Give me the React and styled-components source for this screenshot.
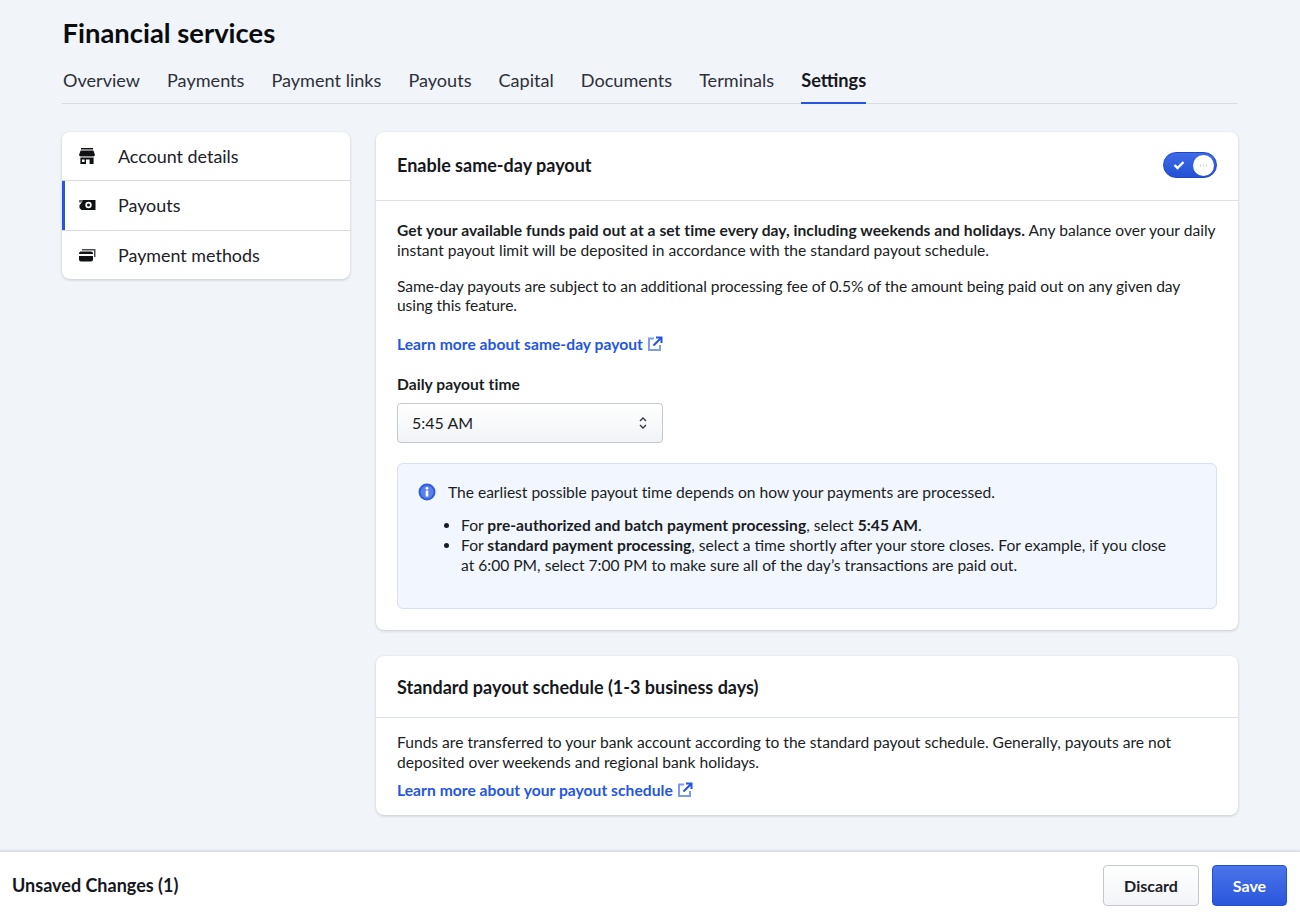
import styled, { createGlobalStyle } from "styled-components";

const GlobalStyle = createGlobalStyle`
  html, body {
    margin: 0;
    padding: 0;
    background: #f1f4f8;
  }
  body {
    font-family: Lato, "Liberation Sans", sans-serif;
    color: #16181d;
  }
  * {
    box-sizing: border-box;
  }
  b {
    letter-spacing: 0.05px;
  }
`;

const Page = styled.div`
  width: 1300px;
  height: 916px;
  overflow: hidden;
  display: flex;
  flex-direction: column;
`;

const Content = styled.main`
  flex: 1;
  padding: 0 62px;
`;

const Title = styled.h1`
  margin: 0;
  padding: 16px 0 0;
  margin-left: 0.5px;
  font-size: 27.4px;
  line-height: 34px;
  font-weight: 700;
  color: #0b0c0f;
`;

const Tabs = styled.nav`
  display: flex;
  gap: 27px;
  margin-top: 14px;
  padding-left: 1px;
  height: 40px;
  border-bottom: 1px solid #d8dbe2;
`;

const Tab = styled.a`
  font-size: ${(p) => (p.$active ? "18.2px" : "18.1px")};
  line-height: 24px;
  padding-top: 4px;
  height: 40px;
  color: ${(p) => (p.$active ? "#16181d" : "#2c3038")};
  font-weight: ${(p) => (p.$active ? 700 : 400)};
  border-bottom: ${(p) => (p.$active ? "2px solid #2456e0" : "none")};
`;

const Columns = styled.div`
  display: grid;
  grid-template-columns: 288px 862px;
  gap: 26px;
  margin-top: 28px;
  align-items: start;
`;

const SideNav = styled.div`
  background: #fff;
  border-radius: 8px;
  box-shadow: 0 1px 3px rgba(30, 40, 60, 0.2);
  overflow: hidden;
`;

const SideItem = styled.div`
  display: flex;
  align-items: center;
  height: ${(p) => p.$height};
  padding: 0 0 ${(p) => p.$lift || "0"} 16px;
  gap: 22px;
  font-size: 17.9px;
  color: #1d2026;
  border-top: ${(p) => (p.$first ? "none" : "1px solid #d8dbe2")};
  box-shadow: ${(p) => (p.$active ? "inset 3px 0 0 #2456e0" : "none")};
`;

const SideIcon = styled.svg`
  width: 18px;
  height: 18px;
  flex: none;
`;

const Stack = styled.div`
  display: flex;
  flex-direction: column;
  gap: 26px;
`;

const Card = styled.section`
  background: #fff;
  border-radius: 8px;
  box-shadow: 0 1px 3px rgba(30, 40, 60, 0.2);
`;

const CardHeader = styled.header`
  display: flex;
  align-items: center;
  justify-content: space-between;
  height: ${(p) => p.$height || "69px"};
  padding: 0 21px ${(p) => p.$lift || "0"};
  border-bottom: 1px solid #dcdfe5;
  font-size: 18px;
  font-weight: 700;
  color: #16181d;
`;

const CardBody = styled.div`
  padding: ${(p) => p.$padding || "20px 21px 21px"};
  font-size: 15.6px;
  line-height: 20px;
  color: #1a1d23;
`;

const Paragraph = styled.p`
  margin: 0 0 ${(p) => p.$gap || "16.4px"};
  line-height: 19.6px;
  letter-spacing: ${(p) => (p.$tight ? "-0.08px" : "normal")};
`;

const Learn = styled.a`
  display: inline-flex;
  align-items: center;
  gap: 4px;
  color: #2456e0;
  font-weight: 700;
  letter-spacing: 0.05px;
  line-height: 20px;
`;

const FieldLabel = styled.div`
  margin-top: 20px;
  font-weight: 700;
  letter-spacing: 0.05px;
  line-height: 20px;
`;

const Select = styled.div`
  display: flex;
  align-items: center;
  justify-content: space-between;
  width: 266px;
  height: 40px;
  margin-top: 9px;
  padding: 0 14px 1px;
  border: 1px solid #c3c7cf;
  border-radius: 4px;
  background: linear-gradient(#ffffff, #f1f3f6);
  font-size: 16px;
`;

const InfoBox = styled.div`
  margin-top: 20px;
  height: 146px;
  padding: 18px 20px;
  background: #f2f6ff;
  border: 1px solid #d5e0f7;
  border-radius: 6px;
`;

const InfoLine = styled.div`
  display: flex;
  align-items: center;
  gap: 12px;
  letter-spacing: -0.02px;
`;

const BulletList = styled.ul`
  margin: 13px 0 0;
  padding: 0 28px 0 43px;
  list-style: disc;
  li {
    line-height: 20px;
  }
`;

const Toggle = styled.div`
  display: flex;
  align-items: center;
  justify-content: space-between;
  width: 54px;
  height: 26px;
  padding: 0 2px 0 9px;
  border-radius: 13px;
  background: linear-gradient(#3f6be6, #2350d6);
  border: 1px solid #2148c4;
`;

const Knob = styled.span`
  display: flex;
  align-items: center;
  justify-content: center;
  width: 21px;
  height: 21px;
  border-radius: 50%;
  background: #fff;
`;

const Footer = styled.footer`
  display: flex;
  align-items: center;
  justify-content: space-between;
  height: 65px;
  padding: 2px 13px 0 12px;
  background: #fff;
  border-top: 1px solid #dcdfe4;
  box-shadow: 0 -1px 2px rgba(30, 40, 60, 0.1);
`;

const FooterLabel = styled.span`
  font-size: 18px;
  font-weight: 700;
  color: #16181d;
`;

const FooterActions = styled.div`
  display: flex;
  gap: 13px;
`;

const Button = styled.button`
  height: 41px;
  width: ${(p) => (p.$primary ? "75px" : "96px")};
  border-radius: 4px;
  font-family: inherit;
  font-size: 16px;
  font-weight: 700;
  color: ${(p) => (p.$primary ? "#fff" : "#1d2026")};
  background: ${(p) =>
    p.$primary
      ? "linear-gradient(#4a74e8, #2a56dc)"
      : "linear-gradient(#ffffff, #f2f4f7)"};
  border: 1px solid ${(p) => (p.$primary ? "#2350d6" : "#c3c7cf")};
`;

const ExternalIcon = () => (
  <svg width="16" height="16" viewBox="0 0 16 16" fill="none">
    <path d="M7 2.500H2v11.500h11V9" stroke="#7f9bee" strokeWidth="2" />
    <path d="M6.500 9.500 14 2M9 1.500h5.500V7" stroke="#2456e0" strokeWidth="2" />
  </svg>
);

const tabs = [
  "Overview",
  "Payments",
  "Payment links",
  "Payouts",
  "Capital",
  "Documents",
  "Terminals",
];

const App = () => {
  return (
    <Page>
      <GlobalStyle />
      <Content>
        <Title>Financial services</Title>
        <Tabs>
          {tabs.map((t) => (
            <Tab key={t}>{t}</Tab>
          ))}
          <Tab $active>Settings</Tab>
        </Tabs>
        <Columns>
          <SideNav>
            <SideItem $first $height="48px">
              <SideIcon viewBox="0 0 18 18" fill="#0f1115">
                <path d="M3 1h12v1.600H3zM2.600 3.600h12.800L17 8a2 2 0 0 1-2.700 1.200 2.600 2.600 0 0 1-2.600 0 2.600 2.600 0 0 1-2.700 0 2.600 2.600 0 0 1-2.600 0 2.600 2.600 0 0 1-2.700 0A2 2 0 0 1 1 8z" />
                <path d="M2.400 10.400h13.200V17h-4v-4.400H8V17H2.400zM4 12.600h2.600V15H4z" fillRule="evenodd" />
              </SideIcon>
              Account details
            </SideItem>
            <SideItem $active $height="50px" $lift="1px">
              <SideIcon viewBox="0 0 18 18" fill="#0f1115">
                <path d="M1 4h4.500L3 6.500H1z" opacity="0.6" />
                <path
                  d="M5 4h12.500v10H3.500L1.500 12V9L3 7.500zM10.500 5.800a3.200 3.200 0 1 0 0 6.400 3.200 3.200 0 0 0 0-6.400zm0 1.700a1.500 1.500 0 1 1 0 3 1.500 1.500 0 0 1 0-3z"
                  fillRule="evenodd"
                />
              </SideIcon>
              Payouts
            </SideItem>
            <SideItem $height="49px">
              <SideIcon viewBox="0 0 18 18" fill="#0f1115">
                <path d="M4 3h13.500v8H16V4.400H4z" opacity="0.75" />
                <path d="M1 7.500A2 2 0 0 1 3 5.500h10a2 2 0 0 1 2 2V8H1zM1 10h14v3.500a2 2 0 0 1-2 2H3a2 2 0 0 1-2-2z" />
              </SideIcon>
              Payment methods
            </SideItem>
          </SideNav>
          <Stack>
            <Card>
              <CardHeader $lift="2px">
                Enable same-day payout
                <Toggle>
                  <svg width="12" height="10" viewBox="0 0 12 10" fill="none">
                    <path d="M1.500 5 4.500 8 10.500 2" stroke="#fff" strokeWidth="2.400" />
                  </svg>
                  <Knob>
                    <svg width="9" height="3" viewBox="0 0 9 3" fill="#c9ccd3">
                      <rect x="1" y="0.500" width="1" height="2" />
                      <rect x="4" y="0.500" width="1" height="2" />
                      <rect x="7" y="0.500" width="1" height="2" />
                    </svg>
                  </Knob>
                </Toggle>
              </CardHeader>
              <CardBody>
                <Paragraph>
                  <b>
                    Get your available funds paid out at a set time every day,
                    including weekends and holidays.
                  </b>{" "}
                  Any balance over your daily instant payout limit will be
                  deposited in accordance with the standard payout schedule.
                </Paragraph>
                <Paragraph $gap="18.600px" $tight>
                  Same-day payouts are subject to an additional processing fee
                  of 0.5% of the amount being paid out on any given day using
                  this feature.
                </Paragraph>
                <Learn>
                  Learn more about same-day payout <ExternalIcon />
                </Learn>
                <FieldLabel>Daily payout time</FieldLabel>
                <Select>
                  5:45 AM
                  <svg width="10" height="16" viewBox="0 0 10 16" fill="none">
                    <path d="M2 6 5 3l3 3M2 10l3 3 3-3" stroke="#33373f" strokeWidth="1.400" />
                  </svg>
                </Select>
                <InfoBox>
                  <InfoLine>
                    <svg width="18" height="18" viewBox="0 0 18 18">
                      <circle cx="9" cy="9" r="8.500" fill="#2f5ce0" />
                      <circle cx="9" cy="9" r="6.500" fill="#5a80ea" />
                      <rect x="7.700" y="7.500" width="2.600" height="6" fill="#fff" />
                      <circle cx="9" cy="5.300" r="1.400" fill="#fff" />
                    </svg>
                    The earliest possible payout time depends on how your
                    payments are processed.
                  </InfoLine>
                  <BulletList>
                    <li>
                      For <b>pre-authorized and batch payment processing</b>,
                      select <b>5:45 AM</b>.
                    </li>
                    <li>
                      For <b>standard payment processing</b>, select a time
                      shortly after your store closes. For example, if you close
                      at 6:00 PM, select 7:00 PM to make sure all of the day’s
                      transactions are paid out.
                    </li>
                  </BulletList>
                </InfoBox>
              </CardBody>
            </Card>
            <Card>
              <CardHeader $height="62px">
                Standard payout schedule (1-3 business days)
              </CardHeader>
              <CardBody $padding="15px 21px 15px">
                <Paragraph $gap="7.800px">
                  Funds are transferred to your bank account according to the
                  standard payout schedule. Generally, payouts are not deposited
                  over weekends and regional bank holidays.
                </Paragraph>
                <Learn>
                  Learn more about your payout schedule <ExternalIcon />
                </Learn>
              </CardBody>
            </Card>
          </Stack>
        </Columns>
      </Content>
      <Footer>
        <FooterLabel>Unsaved Changes (1)</FooterLabel>
        <FooterActions>
          <Button>Discard</Button>
          <Button $primary>Save</Button>
        </FooterActions>
      </Footer>
    </Page>
  );
};

export default App;
